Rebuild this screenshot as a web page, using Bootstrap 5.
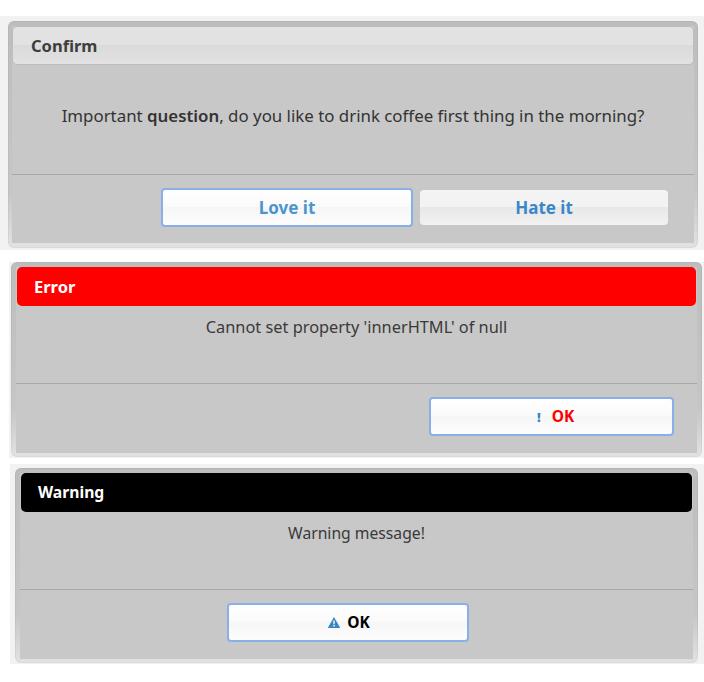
<!DOCTYPE html>
<html lang="en"><head><meta charset="utf-8"><title>Dialogs</title>
<link rel="stylesheet" href="https://cdn.jsdelivr.net/npm/bootstrap@5.3.0/dist/css/bootstrap.min.css">
<style>
html,body{background:#fff;height:682px;overflow:hidden}
body{font-family:"Noto Sans","Lato",sans-serif;font-size:16px;color:#333}
.stage{padding-top:16px}
.strip{background:#f2f2f2}
.strip-a{height:234px;padding:5px 6px 2px 8px;margin-bottom:12px}
.strip-b{height:196px;margin-left:9px;padding:0 2px 1px 2px;margin-bottom:6px}
.strip-c{height:200px;margin-left:10px;padding:4px 6px 1px 5px}
.dlg{height:100%;border-radius:6px;background:linear-gradient(#bdbdbd,#c6c6c6 75%,#e2e2e2);box-shadow:inset 0 0 0 1px rgba(0,0,0,.04);padding:5px 4px}
.strip-b .dlg,.strip-c .dlg{padding:5px 5px 4px}
.pane{height:100%;background:#c8c8c8}
.head{border-radius:5px;font-weight:700;font-size:16.5px;line-height:1;display:flex;align-items:center;height:39px}
.head-a{padding-left:18px;padding-top:2px;color:#3e3e3e;border:1px solid #bdbdbd;background:linear-gradient(#e2e2e2 50%,#dadada 50%,#e2e2e2)}
.head-b{padding-left:17px;padding-top:1px;color:#fff;background:#f00;margin:0 1px}
.head-c{padding-left:17px;color:#fff;background:#000;margin:0 1px;font-size:15.7px}
.msg{text-align:center;line-height:24px}
.msg-a{height:109px;padding-top:39px;font-size:16.85px}
.msg-a b{font-weight:600}
.msg-b{height:77px;padding-top:9px;font-size:16.35px;color:#3a3a3a}
.msg-c{font-size:15.7px}
.foot{border-top:1px solid #a8a8a8;padding-top:13px}
.act{height:39px;border-radius:4px;font-weight:700;font-size:17px;line-height:1;background:linear-gradient(#fff,#fafafa 50%,#f6f6f6 50%,#fdfdfd);border:2px solid #8aaee6;color:#4b95cd;display:flex;align-items:center;justify-content:center;padding:0}
.act-plain{height:35px;border:0;margin-top:2px;background:linear-gradient(#f4f4f4,#f2f2f2 50%,#e8e8e8 50%,#f2f2f2);color:#3a87c8}
.w-love{width:252px}.w-hate{width:248px}.w-err{width:245px}.w-warn{width:242px}
.foot-a{padding-left:149px;gap:7px}
.foot-b{justify-content:flex-end;padding-right:23px}
.foot-c{justify-content:center;padding-right:18px}
.err{color:#f00;font-size:15.5px;gap:11px;padding-left:8px;padding-top:1px}
.blk{color:#000;font-size:15.5px;gap:7px;padding-left:3px}
.ico{flex:none}
</style></head><body>
<div class="stage">
<section class="strip strip-a"><div class="dlg"><div class="pane">
<div class="head head-a">Confirm</div>
<div class="msg msg-a">Important <b>question</b>, do you like to drink coffee first thing in the morning?</div>
<div class="foot d-flex foot-a"><button class="btn act w-love">Love it</button><button class="btn act act-plain w-hate">Hate it</button></div>
</div></div></section>
<section class="strip strip-b"><div class="dlg"><div class="pane">
<div class="head head-b">Error</div>
<div class="msg msg-b">Cannot set property 'innerHTML' of null</div>
<div class="foot d-flex foot-b"><button class="btn act w-err err"><svg class="ico" width="4" height="9" viewBox="0 0 4 10"><path fill="#3a87c0" d="M.4 0h3.2l-.5 6H.9zM.6 7.3h2.8V10H.6z"/></svg>OK</button></div>
</div></div></section>
<section class="strip strip-c"><div class="dlg"><div class="pane">
<div class="head head-c">Warning</div>
<div class="msg msg-b msg-c">Warning message!</div>
<div class="foot d-flex foot-c"><button class="btn act w-warn blk"><svg class="ico" width="12" height="11" viewBox="0 0 12 11"><path fill="#3a87c0" fill-rule="evenodd" d="M6 0l6 10.4c0 .4-.2.6-.6.6H.6c-.4 0-.6-.2-.6-.6zM5.2 3.4l.2 3.8h1.2l.2-3.8zM5.2 8v1.6h1.6V8z"/></svg>OK</button></div>
</div></div></section>
</div>
</body></html>
